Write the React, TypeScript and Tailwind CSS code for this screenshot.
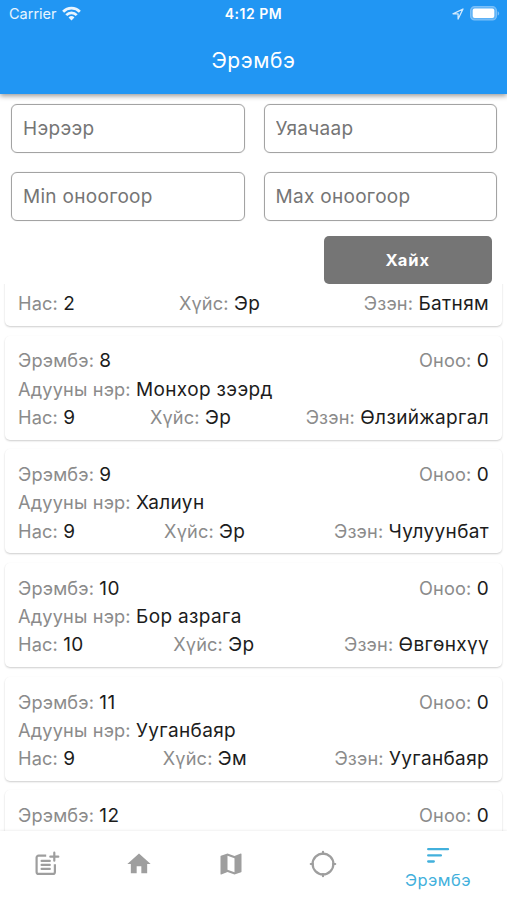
import { MdHome, MdMap } from 'react-icons/md';

type Horse = {
  rank?: number;
  score?: number;
  name?: string;
  age?: number;
  sex?: string;
  owner?: string;
};

const App = () => {
  // Horses in ranking order, only the rows inside the scrolled window are filled in
  const horses: Horse[] = [
    { age: 2, sex: 'Эр', owner: 'Батням' },
    { rank: 8, score: 0, name: 'Монхор зээрд', age: 9, sex: 'Эр', owner: 'Өлзийжаргал' },
    { rank: 9, score: 0, name: 'Халиун', age: 9, sex: 'Эр', owner: 'Чулуунбат' },
    { rank: 10, score: 0, name: 'Бор азрага', age: 10, sex: 'Эр', owner: 'Өвгөнхүү' },
    { rank: 11, score: 0, name: 'Ууганбаяр', age: 9, sex: 'Эм', owner: 'Ууганбаяр' },
    { rank: 12, score: 0 },
  ];

  const filters = ['Нэрээр', 'Уяачаар', 'Min оноогоор', 'Max оноогоор'];

  return (
    <div className="flex h-[900px] w-[507px] flex-col overflow-hidden bg-white font-['Inter',sans-serif]">
      {/* App bar */}
      <header className="relative z-10 h-[94px] shrink-0 bg-[#2196f3] text-white shadow-[0_2px_5px_rgba(0,0,0,0.4)]">
        <div className="grid h-[27px] grid-cols-3 items-center pl-[9px] pr-[7px]">
          <div className="flex items-center gap-[5px] text-[14.5px] text-white/90">
            Carrier
            <WifiIcon />
          </div>
          <span className="-ml-[2px] text-center text-[14px] font-semibold tracking-[0.5px]">4:12 PM</span>
          <div className="flex items-center justify-end gap-[6px]">
            <LocationIcon />
            <BatteryIcon />
          </div>
        </div>
        <h1 className="flex h-[67px] items-center justify-center text-[21px] tracking-[0.6px]">Эрэмбэ</h1>
      </header>

      {/* Search filters */}
      <div className="grid shrink-0 grid-cols-2 gap-x-[19px] gap-y-[19px] pl-[11px] pr-[10px] pt-[10px]">
        {filters.map((label) => (
          <input
            key={label}
            type="text"
            placeholder={label}
            className="h-[49px] w-full rounded-[6px] border border-[#a3a3a3] px-[11px] text-[19px] tracking-[0.3px] shadow-[0_0_1px_#bdbdbd] placeholder:text-[#757575] focus:outline-none"
          />
        ))}
      </div>
      <div className="flex shrink-0 justify-end pr-[15px] pt-[15px]">
        <button className="h-[48px] w-[168.5px] rounded-[5px] bg-[#757575] text-[16.5px] font-bold tracking-[0.9px] text-white">
          Хайх
        </button>
      </div>

      {/* Ranking list */}
      <div className="flex min-h-0 flex-1 flex-col justify-start overflow-hidden px-[5px]">
        <div className="-mt-[62px] flex flex-col gap-[9.8px]">
          {horses.map((horse, index) => (
            <div
              key={index}
              className="flex h-[103.9px] shrink-0 flex-col rounded-[5px] bg-white px-[13px] pt-[10.8px] shadow-[0_1px_2px_rgba(0,0,0,0.2)]"
            >
              {horse.rank !== undefined && (
                <div className="flex justify-between">
                  <Field label="Эрэмбэ" value={horse.rank} />
                  <Field label="Оноо" value={horse.score} />
                </div>
              )}
              {horse.name && <Field label="Адууны нэр" value={horse.name} />}
              {horse.age !== undefined && (
                <div className="mt-auto mb-[8.5px] flex justify-between">
                  <Field label="Нас" value={horse.age} />
                  <Field label="Хүйс" value={horse.sex} />
                  <Field label="Эзэн" value={horse.owner} />
                </div>
              )}
            </div>
          ))}
        </div>
      </div>

      {/* Bottom navigation */}
      <nav className="relative z-10 flex h-[69px] shrink-0 bg-white text-[#9e9e9e] shadow-[0_-1px_2px_rgba(0,0,0,0.06)]">
        <button className="flex flex-1 items-center justify-center pb-[3px]">
          <PostAddIcon />
        </button>
        <button className="flex flex-1 items-center justify-center pb-[3px] pl-[1px]">
          <MdHome size={28} />
        </button>
        <button className="flex flex-1 items-center justify-center pb-[3px]">
          <MdMap size={28} />
        </button>
        <button className="flex flex-1 items-center justify-center pb-[3px]">
          <TargetIcon />
        </button>
        <button className="flex w-[138px] flex-col items-center pt-[10px] text-[#42b0dc]">
          <SortIcon />
          <span className="text-[16.5px] leading-[22px] tracking-[0.45px]">Эрэмбэ</span>
        </button>
      </nav>
    </div>
  );
};

const Field = ({ label, value }: { label: string; value?: string | number }) => (
  <div className="h-[28.2px] whitespace-nowrap text-[19px] leading-[28.2px] tracking-[0.35px] text-[#1c1c1c]">
    <span className="text-[18.2px] tracking-[0.15px] text-[#8b8b8b]">{label}: </span>
    {value}
  </div>
);

const WifiIcon = () => (
  <svg width="19" height="15" viewBox="0 0 20 15" fill="none" stroke="currentColor" strokeWidth="2.9">
    <path d="M1.2 5.6a12.4 12.4 0 0 1 17.6 0" />
    <path d="M4.5 9.2a7.8 7.8 0 0 1 11 0" />
    <path d="M10 14.8 6.9 11.8a4.4 4.4 0 0 1 6.2 0z" fill="currentColor" stroke="none" />
  </svg>
);

const LocationIcon = () => (
  <svg width="12" height="12" viewBox="0 0 12 12" fill="none" stroke="#d3eafd" strokeWidth="1.3" strokeLinejoin="round">
    <path d="M11 1 1 5.8h5.1V11z" />
  </svg>
);

const BatteryIcon = () => (
  <svg width="30" height="15" viewBox="0 0 30 15">
    <rect x="0.6" y="0.7" width="25.8" height="13.2" rx="4" fill="#5db2f7" stroke="#7cc0f8" strokeWidth="1.2" />
    <rect x="2.7" y="2.6" width="21.6" height="9.4" rx="2" fill="#fff" />
    <path d="M27.6 5.2q1.5.5 1.5 2.2t-1.5 2.2z" fill="#7cc0f8" />
  </svg>
);

const PostAddIcon = () => (
  <svg width="28" height="28" viewBox="0 0 28 28" fill="none" stroke="currentColor" strokeWidth="2.2" strokeLinecap="round">
    <path d="M14.2 5.6H6.6a2 2 0 0 0-2 2v14.3a2 2 0 0 0 2 2h14.3a2 2 0 0 0 2-2v-7.6" strokeLinecap="butt" />
    <path d="M22.3 2.7v8M18.3 6.7h8" />
    <path d="M9.6 10.9h8.2M9.6 14.9h8.2M9.6 18.9h8.2" />
  </svg>
);

const TargetIcon = () => (
  <svg width="28" height="28" viewBox="0 0 28 28" fill="none" stroke="currentColor" strokeWidth="2.2" strokeLinecap="round">
    <circle cx="14" cy="14" r="10.4" />
    <path d="M14 1.8V4M14 24v2.2M1.8 14H4M24 14h2.2" />
  </svg>
);

const SortIcon = () => (
  <svg width="28" height="28" viewBox="0 0 28 28" fill="none" stroke="currentColor" strokeWidth="2.3" strokeLinecap="round">
    <path d="M4.2 8.2h19.8M4.2 14.4h12.7M4.2 20.5h5.6" />
  </svg>
);

export default App;
